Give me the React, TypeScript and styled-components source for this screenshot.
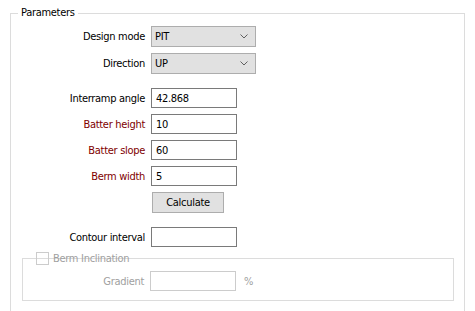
import React from "react";
import styled, { createGlobalStyle } from "styled-components";

const Global = createGlobalStyle`
  html, body {
    margin: 0;
    padding: 0;
    background: #ffffff;
    width: 475px;
    height: 311px;
    overflow: hidden;
  }
  body {
    font-family: "DejaVu Sans Condensed", "Liberation Sans", sans-serif;
    font-size: 11px;
    letter-spacing: -0.3px;
    color: #000000;
  }
`;

const Page = styled.div`
  padding: 0 10px;
`;

const Group = styled.fieldset`
  margin: 6px 0 0;
  padding: 6px 0 14px;
  border: 1px solid #dcdcdc;
  min-width: 0;
`;

const Legend = styled.legend`
  margin-left: 7px;
  padding: 0 3px;
  line-height: 14px;
  font-size: 11px;
`;

const Row = styled.div<{ $gap?: number }>`
  display: flex;
  align-items: center;
  margin-top: ${(p) => p.$gap ?? 0}px;
`;

const Label = styled.span<{ $tone?: "normal" | "accent" | "disabled"; $width?: number }>`
  width: ${(p) => p.$width ?? 134}px;
  margin-right: 6px;
  text-align: right;
  white-space: nowrap;
  color: ${(p) =>
    p.$tone === "accent" ? "#800000" : p.$tone === "disabled" ? "#a0a0a0" : "#000000"};
`;

const Combo = styled.div`
  box-sizing: border-box;
  width: 105px;
  height: 21px;
  border: 1px solid #adadad;
  background: #e1e1e1;
  display: flex;
  align-items: center;
  justify-content: space-between;
  padding: 0 7px 0 3px;
`;

const Input = styled.div<{ $disabled?: boolean }>`
  box-sizing: border-box;
  width: 86px;
  height: 20px;
  border: 1px solid ${(p) => (p.$disabled ? "#cccccc" : "#7a7a7a")};
  background: #ffffff;
  display: flex;
  align-items: center;
  padding: 0 4px;
`;

const Button = styled.div`
  box-sizing: border-box;
  width: 72px;
  height: 21px;
  margin-left: 141px;
  border: 1px solid #adadad;
  background: #e1e1e1;
  display: flex;
  align-items: center;
  justify-content: center;
`;

const SubGroup = styled.div`
  margin: 11px 10px 0 11px;
  border: 1px solid #dcdcdc;
  padding: 0 0 9px;
`;

const SubHeader = styled.div`
  display: flex;
  align-items: center;
  height: 13px;
  margin-top: -7px;
  padding-left: 13px;
  color: #a0a0a0;
`;

const Check = styled.span`
  box-sizing: border-box;
  width: 13px;
  height: 13px;
  border: 1px solid #cccccc;
  margin-right: 4px;
`;

const Unit = styled.span`
  margin-left: 8px;
  color: #a0a0a0;
`;

const Chevron = () => (
  <svg width="8" height="5" viewBox="0 0 8 5">
    <polyline points="0.5,0.5 4,4 7.5,0.5" fill="none" stroke="#606060" strokeWidth="1" />
  </svg>
);

export default function App() {
  return (
    <>
      <Global />
      <Page>
        <Group>
          <Legend>Parameters</Legend>
          <Row>
            <Label>Design mode</Label>
            <Combo>
              <span>PIT</span>
              <Chevron />
            </Combo>
          </Row>
          <Row $gap={6}>
            <Label>Direction</Label>
            <Combo>
              <span>UP</span>
              <Chevron />
            </Combo>
          </Row>
          <Row $gap={14}>
            <Label>Interramp angle</Label>
            <Input>42.868</Input>
          </Row>
          <Row $gap={6}>
            <Label $tone="accent">Batter height</Label>
            <Input>10</Input>
          </Row>
          <Row $gap={6}>
            <Label $tone="accent">Batter slope</Label>
            <Input>60</Input>
          </Row>
          <Row $gap={6}>
            <Label $tone="accent">Berm width</Label>
            <Input>5</Input>
          </Row>
          <Row $gap={6}>
            <Button>Calculate</Button>
          </Row>
          <Row $gap={14}>
            <Label>Contour interval</Label>
            <Input />
          </Row>
          <SubGroup>
            <SubHeader>
              <Check />
              <span>Berm Inclination</span>
            </SubHeader>
            <Row $gap={6}>
              <Label $tone="disabled" $width={121}>Gradient</Label>
              <Input $disabled />
              <Unit>%</Unit>
            </Row>
          </SubGroup>
        </Group>
      </Page>
    </>
  );
}
